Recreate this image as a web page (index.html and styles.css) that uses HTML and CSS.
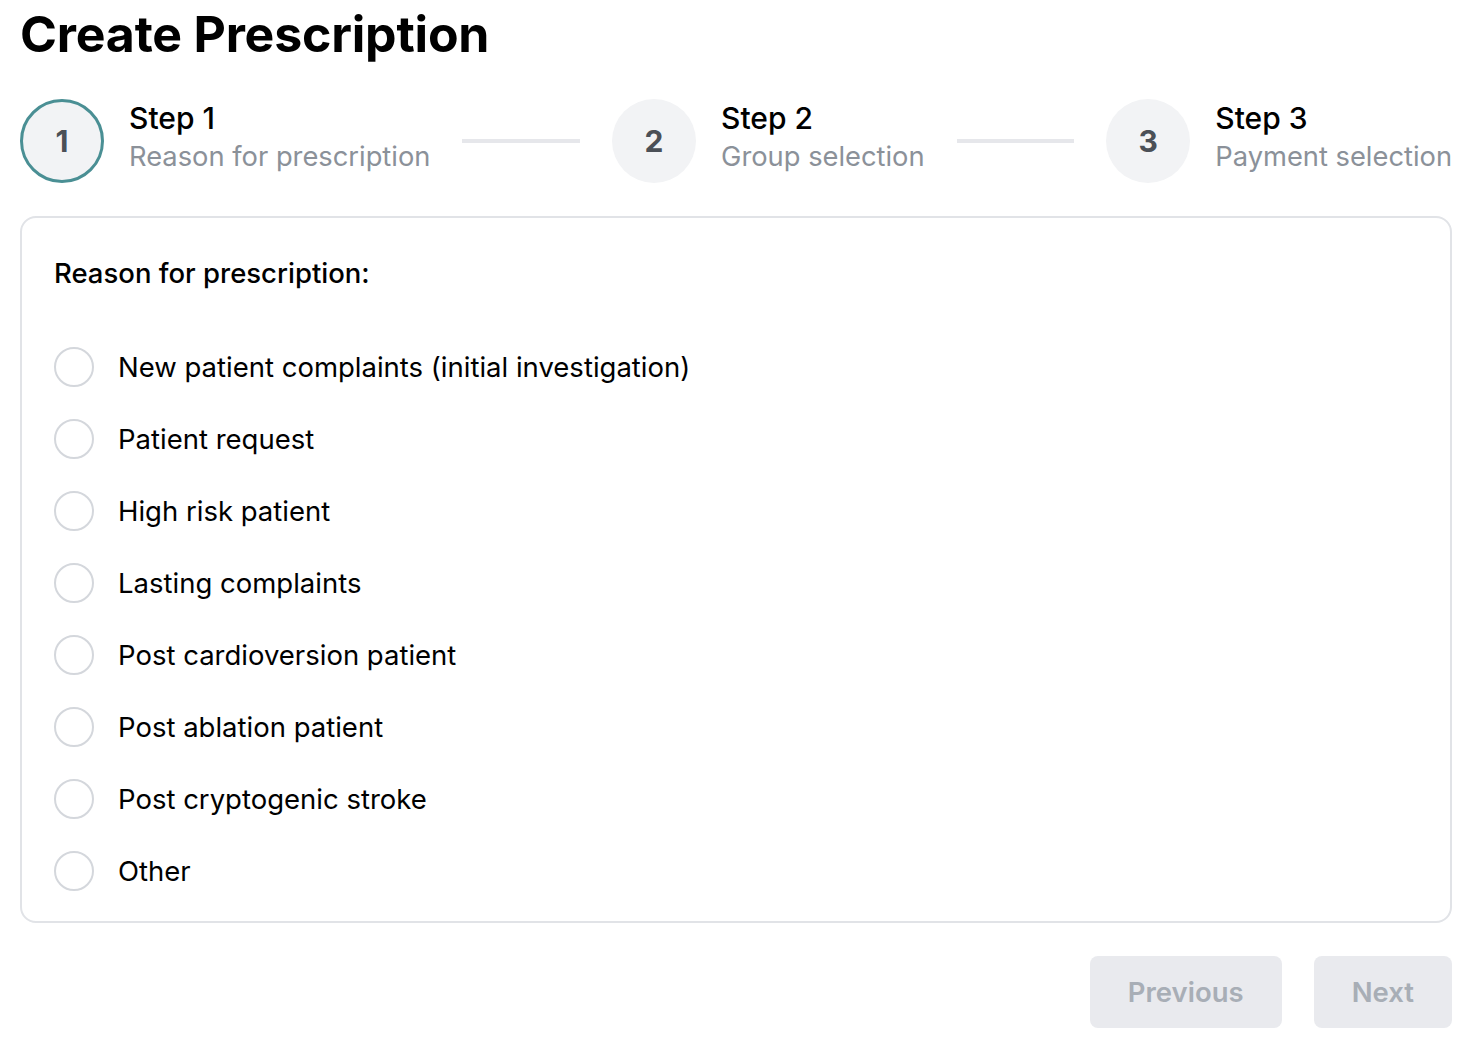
FILE: index.html
```html
<!DOCTYPE html>
<html lang="en">
<head>
<meta charset="utf-8">
<title>Create Prescription</title>
<link rel="stylesheet" href="styles.css">
</head>
<body>
<main class="page">
  <h1 class="title">Create Prescription</h1>

  <ol class="stepper">
    <li class="step step-active">
      <span class="step-circle">1</span>
      <span class="step-text">
        <span class="step-name">Step 1</span>
        <span class="step-desc">Reason for prescription</span>
      </span>
    </li>
    <li class="connector" aria-hidden="true"></li>
    <li class="step">
      <span class="step-circle">2</span>
      <span class="step-text">
        <span class="step-name">Step 2</span>
        <span class="step-desc">Group selection</span>
      </span>
    </li>
    <li class="connector" aria-hidden="true"></li>
    <li class="step">
      <span class="step-circle">3</span>
      <span class="step-text">
        <span class="step-name">Step 3</span>
        <span class="step-desc">Payment selection</span>
      </span>
    </li>
  </ol>

  <section class="card">
    <h2 class="card-title">Reason for prescription:</h2>
    <div class="options">
      <label class="option"><input type="radio" name="reason"><span>New patient complaints (initial investigation)</span></label>
      <label class="option"><input type="radio" name="reason"><span>Patient request</span></label>
      <label class="option"><input type="radio" name="reason"><span>High risk patient</span></label>
      <label class="option"><input type="radio" name="reason"><span>Lasting complaints</span></label>
      <label class="option"><input type="radio" name="reason"><span>Post cardioversion patient</span></label>
      <label class="option"><input type="radio" name="reason"><span>Post ablation patient</span></label>
      <label class="option"><input type="radio" name="reason"><span>Post cryptogenic stroke</span></label>
      <label class="option"><input type="radio" name="reason"><span>Other</span></label>
    </div>
  </section>

  <div class="actions">
    <button class="btn" disabled>Previous</button>
    <button class="btn" disabled>Next</button>
  </div>
</main>
</body>
</html>
```

FILE: styles.css
```css
* { box-sizing: border-box; }

html, body {
  margin: 0;
  padding: 0;
  background: #ffffff;
}

body {
  font-family: Inter, "Noto Sans", "Liberation Sans", sans-serif;
  color: #000000;
}

.page {
  padding: 0 20px;
}

.title {
  margin: 0;
  padding-top: 5px;
  font-size: 50px;
  line-height: 58px;
  font-weight: 700;
  letter-spacing: -0.2px;
}

.stepper {
  list-style: none;
  margin: 0;
  padding: 0;
  margin-top: 36px;
  display: flex;
  align-items: center;
}

.step {
  display: flex;
  align-items: center;
  gap: 25px;
  flex: none;
}

.step-circle {
  width: 84px;
  height: 84px;
  border-radius: 50%;
  background: #f2f3f5;
  display: flex;
  align-items: center;
  justify-content: center;
  font-size: 30px;
  font-weight: 700;
  color: #4b5057;
}

.step-active .step-circle {
  border: 3px solid #4a8f94;
}

.step-text {
  display: flex;
  flex-direction: column;
  margin-top: -6px;
}

.step-name {
  font-size: 30px;
  line-height: 38px;
  font-weight: 500;
  color: #000;
}

.step-desc {
  font-size: 27.3px;
  line-height: 40px;
  color: #8b9199;
}

.connector {
  flex: 1;
  height: 4px;
  background: #e6e7eb;
  margin: 0 32px;
}

.card {
  margin-top: 33px;
  border: 2px solid #e1e3e7;
  border-radius: 16px;
  padding: 38px 32px 30px 32px;
}

.card-title {
  margin: 0;
  font-size: 27.5px;
  line-height: 34px;
  font-weight: 500;
}

.options {
  margin-top: 57px;
  display: flex;
  flex-direction: column;
  gap: 32px;
}

.option {
  display: flex;
  align-items: center;
  gap: 24px;
  font-size: 27.5px;
  line-height: 40px;
  color: #000;
}

.option input {
  appearance: none;
  -webkit-appearance: none;
  margin: 0;
  width: 40px;
  height: 40px;
  border-radius: 50%;
  border: 2px solid #d4d7dc;
  background: #fff;
  flex: none;
}

.actions {
  margin-top: 33px;
  display: flex;
  justify-content: flex-end;
  gap: 32px;
}

.btn {
  font-family: Inter, "Noto Sans", "Liberation Sans", sans-serif;
  height: 72px;
  padding: 0 38px;
  border: none;
  border-radius: 8px;
  background: #e9eaee;
  color: #a8aeb6;
  font-size: 27.5px;
  font-weight: 600;
}
```
